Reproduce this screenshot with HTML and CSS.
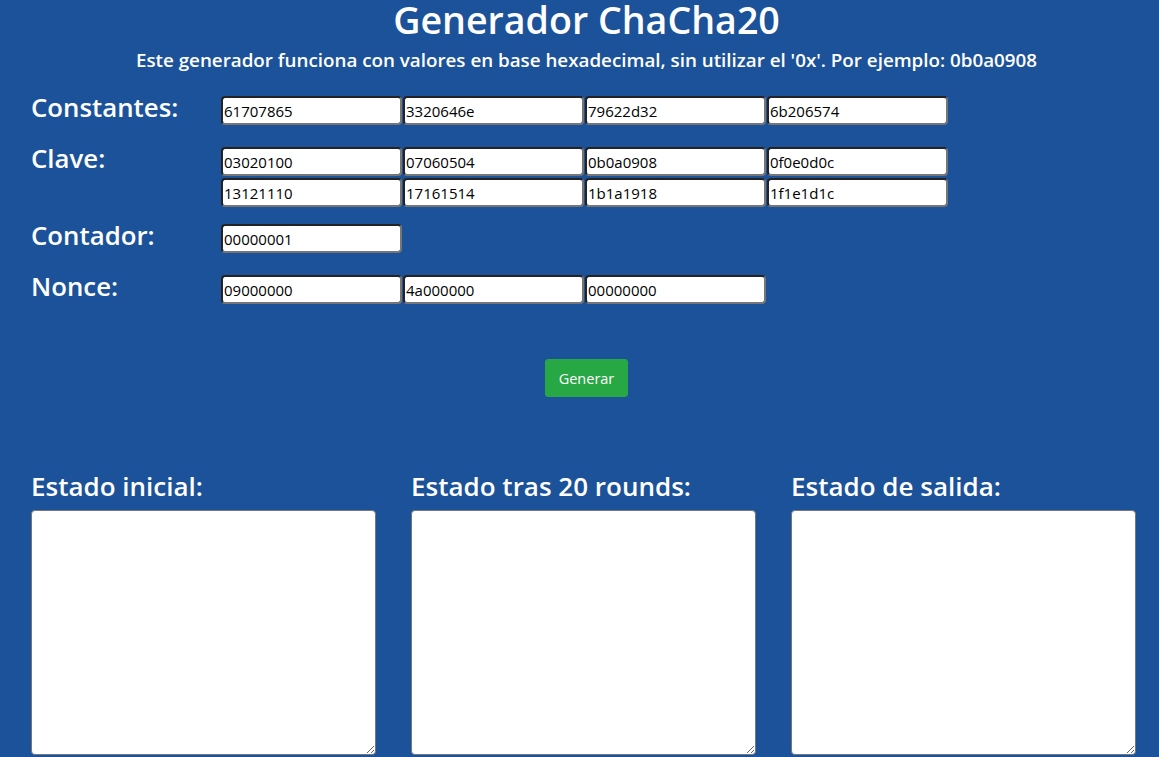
FILE: index.html
```html
<!DOCTYPE html>
<html lang="es">
<head>
<meta charset="utf-8">
<title>Generador ChaCha20</title>
<link rel="stylesheet" href="styles.css">
</head>
<body>
<main class="page">
  <header class="header">
    <h1 class="title">Generador ChaCha20</h1>
    <p class="subtitle">Este generador funciona con valores en base hexadecimal, sin utilizar el '0x'. Por ejemplo: 0b0a0908</p>
  </header>

  <section class="form">
    <div class="row row-single">
      <h3 class="label">Constantes:</h3>
      <div class="inputs">
        <div class="input-line">
          <input class="hex" type="text" value="61707865">
          <input class="hex" type="text" value="3320646e">
          <input class="hex" type="text" value="79622d32">
          <input class="hex" type="text" value="6b206574">
        </div>
      </div>
    </div>
    <div class="row">
      <h3 class="label">Clave:</h3>
      <div class="inputs">
        <div class="input-line">
          <input class="hex" type="text" value="03020100">
          <input class="hex" type="text" value="07060504">
          <input class="hex" type="text" value="0b0a0908">
          <input class="hex" type="text" value="0f0e0d0c">
        </div>
        <div class="input-line">
          <input class="hex" type="text" value="13121110">
          <input class="hex" type="text" value="17161514">
          <input class="hex" type="text" value="1b1a1918">
          <input class="hex" type="text" value="1f1e1d1c">
        </div>
      </div>
    </div>
    <div class="row row-single">
      <h3 class="label">Contador:</h3>
      <div class="inputs">
        <div class="input-line">
          <input class="hex" type="text" value="00000001">
        </div>
      </div>
    </div>
    <div class="row row-single">
      <h3 class="label">Nonce:</h3>
      <div class="inputs">
        <div class="input-line">
          <input class="hex" type="text" value="09000000">
          <input class="hex" type="text" value="4a000000">
          <input class="hex" type="text" value="00000000">
        </div>
      </div>
    </div>
  </section>

  <div class="actions">
    <button class="btn-generate" type="button">Generar</button>
  </div>

  <section class="outputs">
    <div class="output-col">
      <h3 class="out-label">Estado inicial:</h3>
      <textarea class="out-box"></textarea>
    </div>
    <div class="output-col">
      <h3 class="out-label">Estado tras 20 rounds:</h3>
      <textarea class="out-box"></textarea>
    </div>
    <div class="output-col">
      <h3 class="out-label">Estado de salida:</h3>
      <textarea class="out-box"></textarea>
    </div>
  </section>
</main>
</body>
</html>
```

FILE: styles.css
```css
* { box-sizing: border-box; }

html, body {
  margin: 0;
  padding: 0;
  background: #1c5299;
  height: 100%;
  overflow: hidden;
}

body {
  font-family: "Open Sans", "Noto Sans", sans-serif;
  color: #ffffff;
}

.header {
  text-align: center;
  padding-left: 14px;
  padding-top: 0;
}

.title {
  margin: 0;
  font-size: 37.6px;
  font-weight: 600;
  line-height: 40px;
}

.subtitle {
  margin: 8px 0 0 0;
  font-size: 18.8px;
  font-weight: 600;
  line-height: 24px;
}

.form {
  display: flex;
  flex-direction: column;
  gap: 17px;
  padding-left: 31px;
  margin-top: 24px;
}

.row {
  display: flex;
  align-items: flex-start;
}

.label {
  margin: -6px 0 0 0;
  width: 190px;
  flex: none;
  font-size: 25.8px;
  font-weight: 600;
  line-height: 34px;
  height: 34px;
}

.row-single { min-height: 34px; }

.inputs {
  display: flex;
  flex-direction: column;
  gap: 2px;
}

.input-line {
  display: flex;
  gap: 1px;
}

.hex {
  width: 181px;
  height: 29px;
  margin: 0;
  padding: 0 1px;
  font-family: "Open Sans", "Noto Sans", sans-serif;
  font-size: 15px;
  color: #000;
  background: #fff;
  border: 2px solid;
  border-color: #232323 #767676 #767676 #232323;
  border-radius: 4px;
}

.actions {
  display: flex;
  justify-content: center;
  padding-left: 14px;
  margin-top: 50px;
}

.btn-generate {
  width: 83px;
  height: 38px;
  background: #28a745;
  border: 1px solid #28a745;
  border-radius: 3px;
  color: #fff;
  font-family: "Open Sans", "Noto Sans", sans-serif;
  font-size: 14.5px;
  padding: 0;
}

.outputs {
  display: grid;
  grid-template-columns: 345px 345px 345px;
  column-gap: 35px;
  padding-left: 31px;
  margin-top: 73px;
}

.output-col {
  display: flex;
  flex-direction: column;
}

.out-label {
  margin: 0 0 8px 0;
  font-size: 26px;
  font-weight: 600;
  line-height: 32px;
}

.out-box {
  width: 345px;
  height: 245px;
  border: 1px solid #767676;
  border-radius: 4px;
  background: #fff;
  resize: both;
  margin: 0;
}
```
